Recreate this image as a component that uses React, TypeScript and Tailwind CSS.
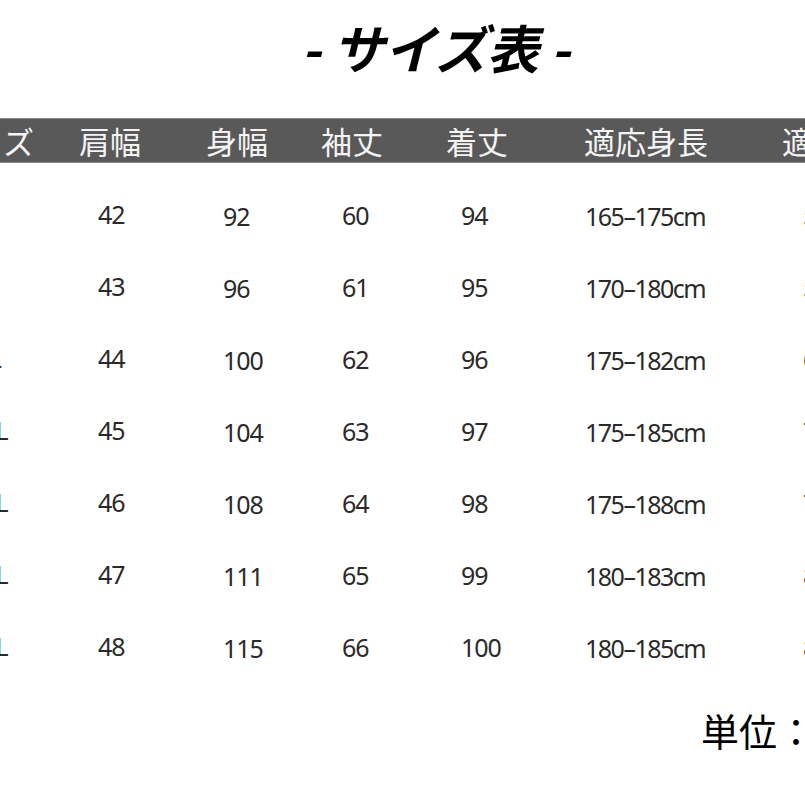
import React from 'react';

const COLS = [
  { box: 'w-[96px] justify-center', head: '', cell: '' },
  { box: 'w-[124px]', head: 'pl-[43px]', cell: 'pl-[62px]' },
  { box: 'w-[120px]', head: 'pl-[46px]', cell: 'pl-[63px] pt-[4px]' },
  { box: 'w-[140px]', head: 'pl-[41px]', cell: 'pl-[62px] pt-[2px]' },
  { box: 'w-[140px]', head: 'pl-[26px]', cell: 'pl-[41px] pt-[2px]' },
  { box: 'w-[200px]', head: 'pl-[24px]', cell: 'pl-[25px] pt-[4px] tracking-[-1.5px]' },
  { box: 'w-[160px]', head: 'pl-[22px]', cell: 'pl-[43px] pt-[2px]' },
];

const HEADERS = ['サイズ', '肩幅', '身幅', '袖丈', '着丈', '適応身長', '適応体重'];

const ROWS = [
  ['M', '42', '92', '60', '94', '165–175cm', '50–60kg'],
  ['L', '43', '96', '61', '95', '170–180cm', '55–65kg'],
  ['XL', '44', '100', '62', '96', '175–182cm', '65–70kg'],
  ['2XL', '45', '104', '63', '97', '175–185cm', '70–75kg'],
  ['3XL', '46', '108', '64', '98', '175–188cm', '75–80kg'],
  ['4XL', '47', '111', '65', '99', '180–183cm', '80–85kg'],
  ['5XL', '48', '115', '66', '100', '180–185cm', '85–90kg'],
];

const JP = { fontFamily: '"Noto Sans CJK JP", "Noto Sans", sans-serif' };
const NUM = { fontFamily: '"Noto Sans", "Noto Sans CJK JP", sans-serif' };

export default function App() {
  return (
    <div className="w-[805px] h-[805px] overflow-hidden bg-white">
      {/* title */}
      <div className="pt-[21px] pl-[66px] flex justify-center">
        <h1 className="text-[52px] leading-none font-bold italic text-black" style={JP}>
          - サイズ表 -
        </h1>
      </div>

      <div className="-ml-[60px] w-[1000px]">
        {/* header bar */}
        <div className="mt-[45px] h-[45px] flex items-center bg-[#595959] border-y border-[#8a8a8a] text-[31px] leading-none text-[#f4f4f4]" style={JP}>
          {HEADERS.map((h, i) => (
            <div key={h} className={`flex shrink-0 ${COLS[i].box} ${COLS[i].head}`}>
              {h}
            </div>
          ))}
        </div>

        {/* rows */}
        <div className="mt-[15px]">
          {ROWS.map((r) => (
            <div key={r[0]} className="h-[72px] flex items-center text-[25px] leading-none text-[#2a2a2a] tracking-[-1px]" style={NUM}>
              {r.map((v, i) => (
                <div key={i} className={`flex shrink-0 ${COLS[i].box} ${COLS[i].cell}`}>
                  {v}
                </div>
              ))}
            </div>
          ))}
        </div>
      </div>

      <div className="mt-[29px] pl-[701px] text-[38px] leading-none text-black whitespace-nowrap" style={JP}>
        単位：cm
      </div>
    </div>
  );
}
